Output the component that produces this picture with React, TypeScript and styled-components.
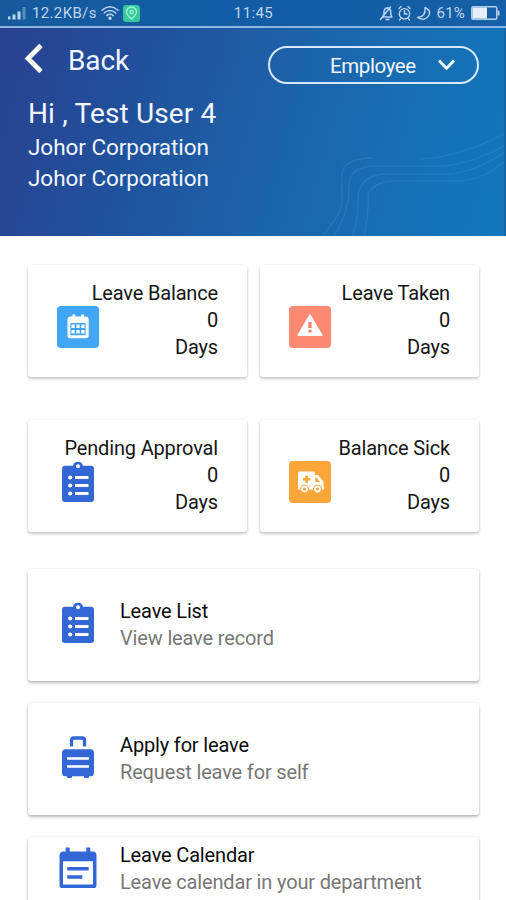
import React from "react";
import styled, { createGlobalStyle } from "styled-components";

const GlobalStyle = createGlobalStyle`
  * { box-sizing: border-box; }
  body { margin: 0; background: #fefefe; font-family: Roboto, "Liberation Sans", sans-serif; overflow: hidden; }
  svg { display: block; flex: none; }
`;

const Screen = styled.main`
  width: 506px;
  height: 900px;
  overflow: hidden;
  display: flex;
  flex-direction: column;
`;

const StatusBar = styled.div`
  height: 28px;
  flex: none;
  display: grid;
  grid-template-columns: 1fr auto 1fr;
  align-items: center;
  padding: 0 6px 0 7px;
  background: linear-gradient(90deg, #165a9c, #125ca6 50%, #1560a6);
  border-bottom: 2px solid #8fb5e2;
  color: #bdd6f0;
  font-size: 15px;
  line-height: 26px;
`;

const StatusGroup = styled.div<{ $end?: boolean }>`
  display: flex;
  align-items: center;
  gap: ${(p) => (p.$end ? 6 : 4)}px;
  justify-content: ${(p) => (p.$end ? "flex-end" : "flex-start")};
`;

const StatusText = styled.span<{ $spacing?: number }>`
  letter-spacing: ${(p) => p.$spacing ?? 0}px;
  white-space: nowrap;
`;

const Hero = styled.header`
  position: relative;
  height: 208px;
  flex: none;
  color: #f1f6ff;
  background: linear-gradient(106deg, #29418f 0%, #21509c 26%, #1d61a8 52%, #176fb5 78%, #1277bd 100%);
  border-right: 2px solid #1767a7;
`;

const Waves = styled.svg`
  position: absolute;
  right: 0;
  bottom: 0;
`;

const NavRow = styled.div`
  display: flex;
  height: 66px;
  padding-left: 24px;
`;

const BackLabel = styled.span`
  margin: 15px 0 0 24px;
  width: 200px;
  font-size: 28px;
  line-height: 36px;
  letter-spacing: -0.15px;
`;

const BackIcon = styled.svg`
  margin-top: 15px;
`;

const RoleSelect = styled.button`
  margin: 18px 0 0;
  width: 211px;
  height: 38px;
  padding: 2px 22px 0 60px;
  display: flex;
  align-items: center;
  justify-content: space-between;
  border: 2px solid #d7e8fa;
  border-radius: 19px;
  background: transparent;
  color: #f1f6ff;
  font: 20.5px/34px Roboto, sans-serif;
  letter-spacing: -0.4px;
`;

const Chevron = styled.svg`
  margin-top: -3px;
`;

const Greeting = styled.h1`
  margin: 2px 0 0 28px;
  font-size: 28px;
  font-weight: 400;
  line-height: 36px;
  letter-spacing: 0.15px;
`;

const Company = styled.p`
  margin: 0 0 0 28px;
  font-size: 22.5px;
  line-height: 31px;
  letter-spacing: -0.05px;
`;

const Content = styled.section`
  padding: 29px 27px 0 28px;
  display: flex;
  flex-direction: column;
`;

const StatGrid = styled.div`
  display: grid;
  grid-template-columns: 219px 219px;
  column-gap: 13px;
  row-gap: 43px;
`;

const Card = styled.article`
  height: 112px;
  display: flex;
  align-items: flex-start;
  background: #fff;
  border-radius: 3px;
  box-shadow: 0 2px 3px rgba(0, 0, 0, 0.2), 0 0 2px rgba(0, 0, 0, 0.1);
`;

const StatCard = styled(Card)`
  padding: 15px 29px 0 0;
`;

const StatText = styled.div`
  flex: 1;
  text-align: right;
  font-size: 20px;
  line-height: 27px;
  letter-spacing: -0.16px;
  color: #151515;
  white-space: nowrap;
`;

const IconTile = styled.div<{ $color: string }>`
  width: 42px;
  height: 42px;
  flex: none;
  margin: 26px -71px 0 29px;
  border-radius: 4px;
  background: ${(p) => p.$color};
`;

const MenuList = styled.div`
  margin-top: 37px;
  display: flex;
  flex-direction: column;
  gap: 22px;
`;

const MenuCard = styled(Card)<{ $top: number }>`
  padding: ${(p) => p.$top}px 0 0 29px;
  box-shadow: 0 2px 3px rgba(0, 0, 0, 0.26), 0 0 2px rgba(0, 0, 0, 0.1);
`;

const MenuIcon = styled.div`
  padding-top: 4px;
`;

const MenuText = styled.div`
  margin-left: 21px;
  font-size: 20px;
  line-height: 27px;
  letter-spacing: -0.16px;
`;

const MenuTitle = styled.div`
  color: #0b0b0b;
`;

const MenuNote = styled.div`
  color: #777;
`;

const BLUE = "#3467d6";

const Signal = () => (
  <svg width="21" height="16" viewBox="0 0 21 16" fill="#bdd6f0">
    <rect x="1" y="11.500" width="2.500" height="3" />
    <rect x="5.500" y="9.500" width="3" height="5" />
    <rect x="10.500" y="6.500" width="3" height="8" />
    <rect x="15.500" y="2" width="3" height="12.500" opacity=".4" />
  </svg>
);

const Wifi = () => (
  <svg width="18" height="16" viewBox="0 0 18 16" fill="none" stroke="#bdd6f0" strokeWidth="1.500" strokeLinecap="round">
    <path d="M1 5.200Q9-1.600 17 5.200M3.200 8Q9 3 14.800 8M5.700 10.600Q9 7.600 12.200 10.600" />
    <circle cx="9" cy="13.300" r="1" fill="#bdd6f0" />
  </svg>
);

const GreenPin = () => (
  <svg width="17" height="17" viewBox="0 0 17 17" fill="none" stroke="#a5f5dc">
    <rect width="17" height="17" rx="3" fill="#35c99c" stroke="none" />
    <path d="M8.500 14C5.500 11 3.500 9.500 3.500 7a5 5 0 0 1 10 0c0 2.500-2 4-5 7Z" strokeWidth="1.300" />
    <circle cx="8.500" cy="7" r="1.700" strokeWidth="1.200" />
  </svg>
);

const StatusIcons = () => (
  <svg width="52" height="17" viewBox="0 0 52 17" fill="none" stroke="#bdd6f0" strokeWidth="1.400" strokeLinecap="round" strokeLinejoin="round">
    <path d="M3.500 12H13l-1.300-3V6Q11 3 8.500 2.800Q5 3.500 5 7v2L3.500 12M7 14.500h3M1.500 14.500L11.500 2" />
    <circle cx="25.500" cy="8.800" r="5.200" />
    <path d="M20 3.500l2-2M31 3.500l-2-2M25.500 5.800v3.200H28M21.500 14l-1 1M29.500 14l1 1" />
    <path d="M46 2.500Q52 5 50 10Q46.500 17 38.500 12.500Q47 12 46 2.500Z" />
  </svg>
);

const Battery = () => (
  <svg width="29" height="14" viewBox="0 0 29 14">
    <rect x=".8" y=".8" width="25" height="12.400" rx="1.500" fill="none" stroke="#b1cfed" strokeWidth="1.500" />
    <rect x="1.500" y="1.500" width="14.500" height="11" fill="#e4effa" />
    <path d="M26.500 4.500h2v5h-2z" fill="#b1cfed" />
  </svg>
);

const CalendarGlyph = () => (
  <svg width="42" height="42" viewBox="0 0 42 42" fill="#fff">
    <path fillRule="evenodd" d="M13.500 10.500h2V8.500h2.800v2h5.800v-2h2.800v2h1.800a3 3 0 0 1 3 3v16.300a2.500 2.500 0 0 1-2.500 2.500H13a2.500 2.500 0 0 1-2.500-2.500V13.500a3 3 0 0 1 3-3ZM13.400 17v12.200h15.200V17Z" />
    <path d="M14.500 18.500h3.200v3.400h-3.200zm4.900 0h3.300v3.400h-3.300zm4.900 0h3.200v3.400h-3.200zM14.500 24h3.200v3.400h-3.200zm4.900 0h3.300v3.400h-3.300zm4.900 0h3.200v3.400h-3.200z" />
  </svg>
);

const WarningGlyph = () => (
  <svg width="42" height="42" viewBox="0 0 42 42" fill="#fff" stroke="#fff" strokeWidth="2" strokeLinejoin="round">
    <path d="M21 9.500L9.500 29h23Z" />
    <path d="M21 16v6M21 23.800v2.700" stroke="#ff806b" strokeWidth="3.200" />
  </svg>
);

const AmbulanceGlyph = () => (
  <svg width="42" height="42" viewBox="0 0 42 42" fill="#fff">
    <path d="M10.500 10.500h14A1.500 1.500 0 0 1 26 12v2h2.200q1 0 1.600.7l4.200 5.200q.5.700.5 1.500v4.300h.7v2.800H9V12a1.500 1.500 0 0 1 1.500-1.500Z" />
    <path d="M16.300 14.500h2.600v2.400h2.400v2.600h-2.400v2.400h-2.600v-2.400h-2.400v-2.600h2.400zM26.300 16.500h1.200l3.400 4.500h-4.600z" fill="#ffa63a" />
    <circle cx="15.500" cy="28" r="4" stroke="#ffa63a" strokeWidth="1" />
    <circle cx="28.500" cy="28" r="4" stroke="#ffa63a" strokeWidth="1" />
    <circle cx="15.500" cy="28" r="1.500" fill="#ffa63a" />
    <circle cx="28.500" cy="28" r="1.500" fill="#ffa63a" />
  </svg>
);

const Clipboard = () => (
  <svg width="42" height="42" viewBox="0 0 42 42">
    <path fillRule="evenodd" fill={BLUE} d="M8 4.800h8a5.100 5.100 0 0 1 10 0h8a3 3 0 0 1 3 3V38a3 3 0 0 1-3 3H8a3 3 0 0 1-3-3V7.800a3 3 0 0 1 3-3ZM21 3.200a2 2 0 1 0 0 4a2 2 0 0 0 0-4Z" />
    <path stroke="#fff" strokeWidth="2.900" d="M18 16.500h13.500M18 24.500h13.500M18 32.500h13.500" />
    <g fill="#fff">
      <circle cx="13.200" cy="16.500" r="2.100" />
      <circle cx="13.200" cy="24.500" r="2.100" />
      <circle cx="13.200" cy="32.500" r="2.100" />
    </g>
  </svg>
);

const Suitcase = () => (
  <svg width="42" height="42" viewBox="0 0 42 42">
    <path d="M14.500 10.500V4.200Q14.500 2 16.700 2h8.600q2.200 0 2.200 2.200v6.300" fill="none" stroke={BLUE} strokeWidth="3.300" />
    <path fill={BLUE} d="M8.500 13.200h25a3.500 3.500 0 0 1 3.500 3.500v20a3.500 3.500 0 0 1-3.500 3.500h-1.200l-.7 1.800h-4.200l-.7-1.800H15.300l-.7 1.800h-4.200l-.7-1.800H8.500A3.500 3.500 0 0 1 5 36.700v-20a3.500 3.500 0 0 1 3.500-3.500Z" />
    <path stroke="#fff" strokeWidth="2.700" d="M10 22.500h22M10 30.500h22" />
  </svg>
);

const EventNote = () => (
  <svg width="42" height="42" viewBox="0 0 42 42">
    <path fillRule="evenodd" fill={BLUE} d="M6.500 5.500h2.200v-4h4v4h16.600v-4h4v4h2.200a4 4 0 0 1 4 4V39a3.500 3.500 0 0 1-3.500 3.500H6A3.500 3.500 0 0 1 2.500 39V9.500a4 4 0 0 1 4-4ZM6 15.300v23.200h30V15.300Z" />
    <path stroke={BLUE} strokeWidth="3.600" d="M10.300 22.800h21.400M10.300 31h15" />
  </svg>
);

const stats = [
  { label: "Leave Balance", color: "#42a5f5", icon: <CalendarGlyph /> },
  { label: "Leave Taken", color: "#ff8a73", icon: <WarningGlyph /> },
  { label: "Pending Approval", color: "transparent", icon: <Clipboard /> },
  { label: "Balance Sick", color: "#ffa63a", icon: <AmbulanceGlyph /> },
];

const menu = [
  { title: "Leave List", note: "View leave record", top: 29, icon: <Clipboard /> },
  { title: "Apply for leave", note: "Request leave for self", top: 29, icon: <Suitcase /> },
  { title: "Leave Calendar", note: "Leave calendar in your department", top: 5, icon: <EventNote /> },
];

export default function App() {
  return (
    <>
      <GlobalStyle />
      <Screen>
        <StatusBar>
          <StatusGroup>
            <Signal />
            <StatusText $spacing={0.35}>12.2KB/s</StatusText>
            <Wifi />
            <GreenPin />
          </StatusGroup>
          <StatusText $spacing={0.4}>11:45</StatusText>
          <StatusGroup $end>
            <StatusIcons />
            <StatusText $spacing={0.2}>61%</StatusText>
            <Battery />
          </StatusGroup>
        </StatusBar>
        <Hero>
          <Waves width="190" height="115" viewBox="314 121 190 115" fill="none" stroke="#5aa0da" strokeOpacity=".22" strokeWidth="1.300">
            <path d="M323 236C334 220 342 212 342 200V174Q343 159 372 158M334 236Q350 210 349 185Q350 166 376 166H442Q470 164 504 146M353 236Q359 216 358 196Q361 174 388 174H450Q474 172 504 153M364 236Q369 214 368 194Q374 181 396 181H459Q482 180 504 162M420 159Q456 158 504 134" />
          </Waves>
          <NavRow>
            <BackIcon width="20" height="31" viewBox="0 0 20 31" fill="none" stroke="#fff" strokeWidth="4.800">
              <path d="M17 2.500L4 15.500l13 13" />
            </BackIcon>
            <BackLabel>Back</BackLabel>
            <RoleSelect>
              Employee
              <Chevron width="17" height="12" viewBox="0 0 17 12" fill="none" stroke="#fff" strokeWidth="2.800">
                <path d="M1 1.500l7.500 8 7.500-8" />
              </Chevron>
            </RoleSelect>
          </NavRow>
          <Greeting>Hi , Test User 4</Greeting>
          <Company>Johor Corporation</Company>
          <Company>Johor Corporation</Company>
        </Hero>
        <Content>
          <StatGrid>
            {stats.map((s) => (
              <StatCard key={s.label}>
                <IconTile $color={s.color}>{s.icon}</IconTile>
                <StatText>
                  <div>{s.label}</div>
                  <div>0</div>
                  <div>Days</div>
                </StatText>
              </StatCard>
            ))}
          </StatGrid>
          <MenuList>
            {menu.map((m) => (
              <MenuCard key={m.title} $top={m.top}>
                <MenuIcon>{m.icon}</MenuIcon>
                <MenuText>
                  <MenuTitle>{m.title}</MenuTitle>
                  <MenuNote>{m.note}</MenuNote>
                </MenuText>
              </MenuCard>
            ))}
          </MenuList>
        </Content>
      </Screen>
    </>
  );
}
